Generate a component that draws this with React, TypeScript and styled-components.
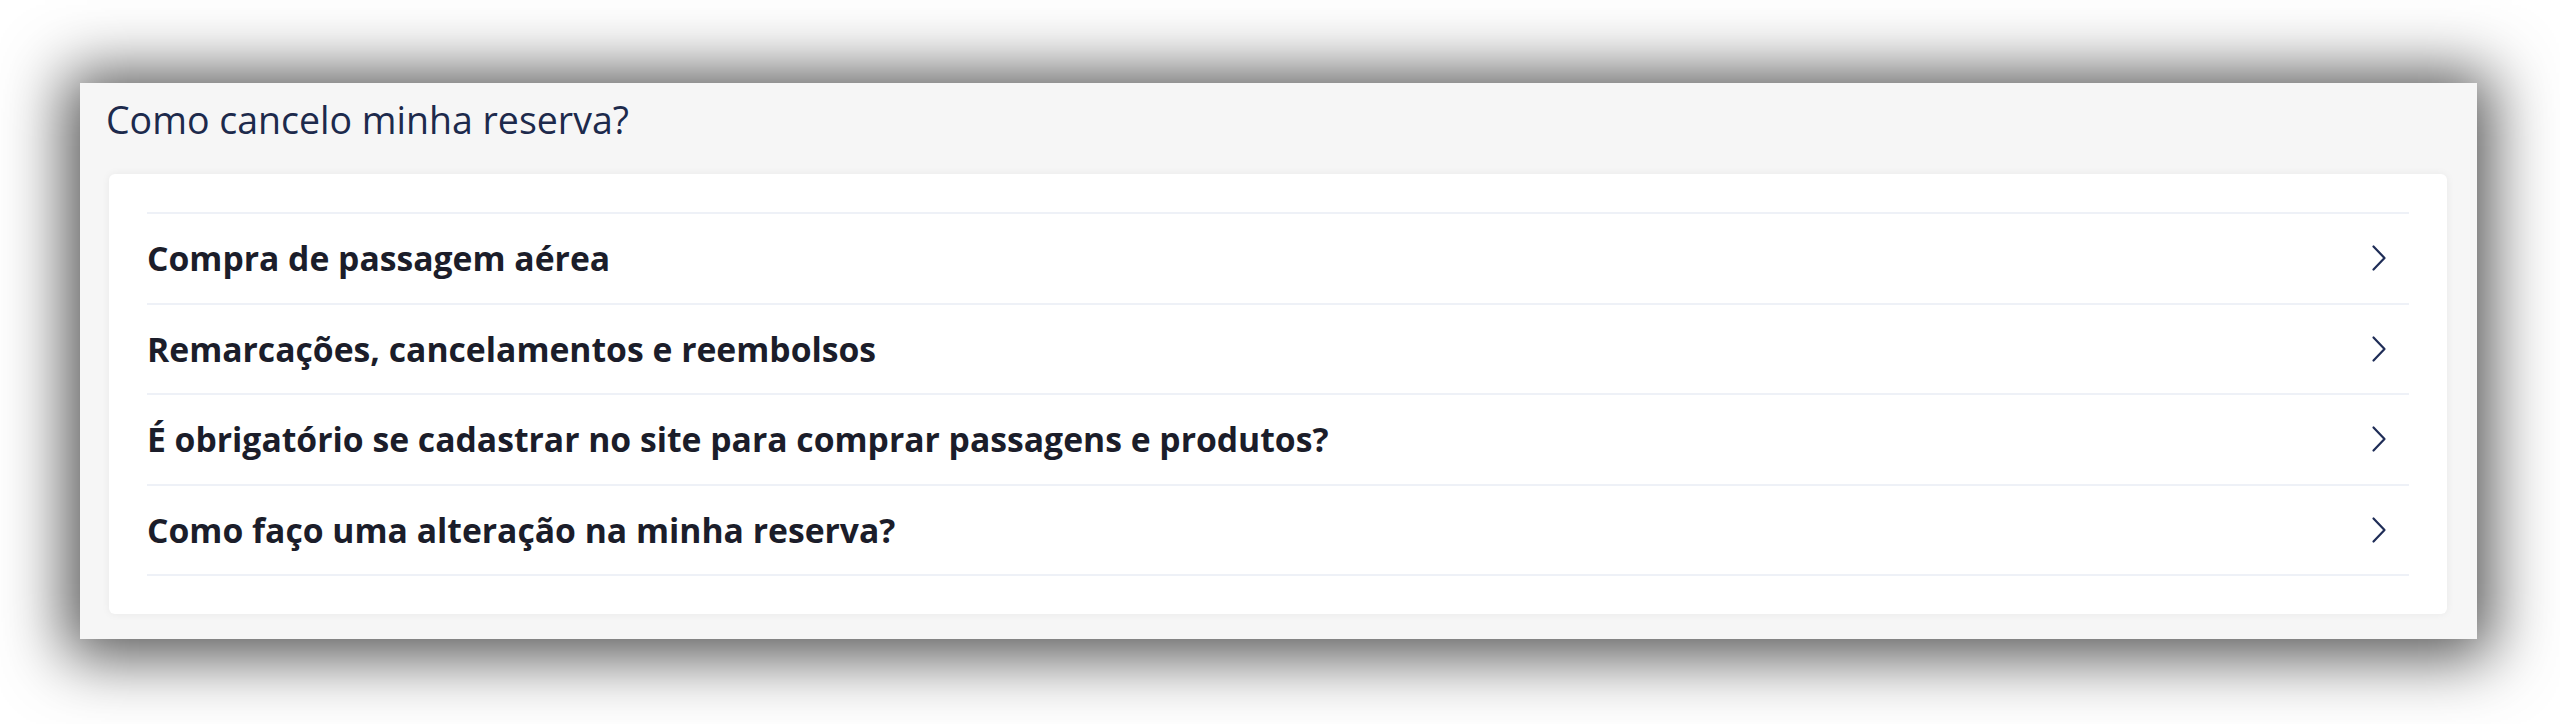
import React from "react";
import styled, { createGlobalStyle } from "styled-components";

const GlobalStyle = createGlobalStyle`
  html, body {
    margin: 0;
    padding: 0;
    background: #ffffff;
  }
  body {
    font-family: "Open Sans", "Noto Sans", "Liberation Sans", sans-serif;
  }
`;

const Page = styled.div`
  padding: 83px 0 85px 80px;
`;

const Panel = styled.section`
  width: 2397px;
  box-sizing: border-box;
  background: #f6f6f6;
  padding: 12px 30px 25px 29px;
  box-shadow: 0 4px 60px 14px rgba(0, 0, 0, 0.68);
`;

const Title = styled.h2`
  margin: 0 0 30px -3px;
  font-size: 37.5px;
  line-height: 49px;
  font-weight: 400;
  color: #1d2a4c;
`;

const Card = styled.div`
  background: #ffffff;
  border-radius: 6px;
  padding: 38px;
  box-shadow: 0 0 8px rgba(0, 0, 0, 0.06);
`;

const List = styled.ul`
  list-style: none;
  margin: 0;
  padding: 0;
  border-top: 2px solid #eef1f7;
`;

const Row = styled.li`
  display: flex;
  align-items: center;
  justify-content: space-between;
  min-height: 88.5px;
  border-bottom: 2px solid #eef1f7;
  cursor: pointer;
`;

const RowText = styled.span`
  font-size: 33.7px;
  line-height: 46px;
  font-weight: 700;
  color: #1b1d2a;
`;

const Chevron = styled.svg`
  width: 14px;
  height: 26px;
  margin-right: 23px;
  flex: none;
  overflow: visible;
`;

const items = [
  "Compra de passagem aérea",
  "Remarcações, cancelamentos e reembolsos",
  "É obrigatório se cadastrar no site para comprar passagens e produtos?",
  "Como faço uma alteração na minha reserva?",
];

export default function App() {
  return (
    <>
      <GlobalStyle />
      <Page>
        <Panel>
          <Title>Como cancelo minha reserva?</Title>
          <Card>
            <List>
              {items.map((t) => (
                <Row key={t}>
                  <RowText>{t}</RowText>
                  <Chevron viewBox="0 0 14 26" aria-hidden="true">
                    <polyline
                      points="1.5,1.5 12.5,13 1.5,24.5"
                      fill="none"
                      stroke="#1f2d57"
                      strokeWidth="2.2"
                      strokeLinecap="round"
                      strokeLinejoin="round"
                    />
                  </Chevron>
                </Row>
              ))}
            </List>
          </Card>
        </Panel>
      </Page>
    </>
  );
}
